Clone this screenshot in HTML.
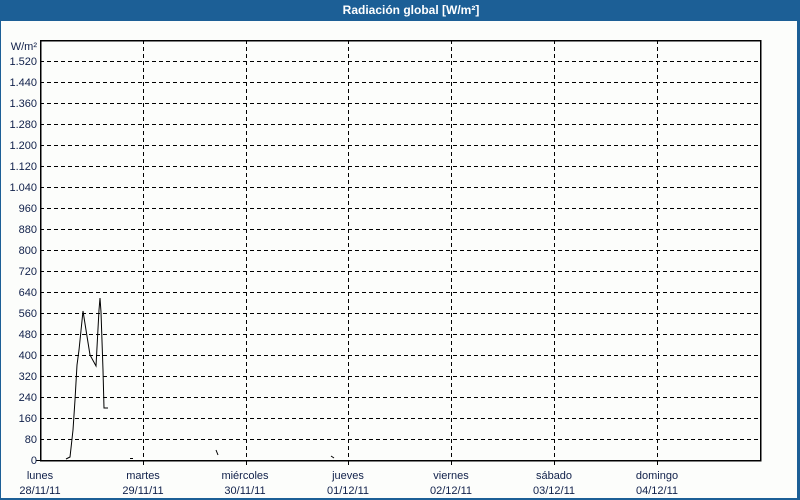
<!DOCTYPE html>
<html><head><meta charset="utf-8"><style>
html,body{margin:0;padding:0;}
body{width:800px;height:500px;overflow:hidden;background:#fcfdfb;position:relative;font-family:"Liberation Sans",sans-serif;}
.bar{position:absolute;left:0;top:0;width:800px;height:21px;background:#1c5f96;color:#fff;font-weight:bold;font-size:12px;line-height:21px;text-align:center;text-indent:22px;}
.frame{position:absolute;left:0;top:21px;width:796px;height:477px;border-left:1px solid #1c5f96;border-right:3px solid #1c5f96;border-bottom:2px solid #1c5f96;}
svg{position:absolute;left:0;top:0;}
text{font-family:"Liberation Sans",sans-serif;font-size:11px;fill:#10204a;}
</style></head><body>
<div class="bar">Radiación global [W/m²]</div>
<div class="frame"></div>
<svg width="800" height="500" viewBox="0 0 800 500">
<g stroke="#000" stroke-width="1" stroke-dasharray="4,3" fill="none" shape-rendering="crispEdges">
<path d="M40 61.5H760M40 82.5H760M40 103.5H760M40 124.5H760M40 145.5H760M40 166.5H760M40 187.5H760M40 208.5H760M40 229.5H760M40 250.5H760M40 271.5H760M40 292.5H760M40 313.5H760M40 334.5H760M40 355.5H760M40 376.5H760M40 397.5H760M40 418.5H760M40 439.5H760"/>
<path d="M143.5 40V460M246.5 40V460M348.5 40V460M451.5 40V460M554.5 40V460M657.5 40V460"/>
</g>
<g stroke="#000" stroke-width="1" fill="none" shape-rendering="crispEdges">
<rect x="40.5" y="40.5" width="720" height="420" stroke-width="1.5"/>
<path d="M143.5 460V465M246.5 460V465M348.5 460V465M451.5 460V465M554.5 460V465M657.5 460V465M36 460.5H40"/>
</g>
<g stroke="#000" stroke-width="1" fill="none">
<polyline points="66,459 70,457 73,430 75,400 77,365 79,350 83,311 86,330 90,355 96,366 99,310 100,298 101,312 103,370 104,408 108,408"/>
<path d="M130 458.5H133M216 450L218 455M331 456L334 458"/>
</g>
<g text-anchor="end">
<text x="37" y="50">W/m²</text>
<text x="37" y="65">1.520</text><text x="37" y="86">1.440</text><text x="37" y="107">1.360</text><text x="37" y="128">1.280</text><text x="37" y="149">1.200</text><text x="37" y="170">1.120</text><text x="37" y="191">1.040</text><text x="37" y="212">960</text><text x="37" y="233">880</text><text x="37" y="254">800</text><text x="37" y="275">720</text><text x="37" y="296">640</text><text x="37" y="317">560</text><text x="37" y="338">480</text><text x="37" y="359">400</text><text x="37" y="380">320</text><text x="37" y="401">240</text><text x="37" y="422">160</text><text x="37" y="443">80</text><text x="37" y="464">0</text>
</g>
<g text-anchor="middle">
<text x="40" y="479">lunes</text><text x="40" y="494">28/11/11</text>
<text x="143" y="479">martes</text><text x="143" y="494">29/11/11</text>
<text x="245" y="479">miércoles</text><text x="245" y="494">30/11/11</text>
<text x="348" y="479">jueves</text><text x="348" y="494">01/12/11</text>
<text x="451" y="479">viernes</text><text x="451" y="494">02/12/11</text>
<text x="554" y="479">sábado</text><text x="554" y="494">03/12/11</text>
<text x="657" y="479">domingo</text><text x="657" y="494">04/12/11</text>
</g>
</svg>
</body></html>
